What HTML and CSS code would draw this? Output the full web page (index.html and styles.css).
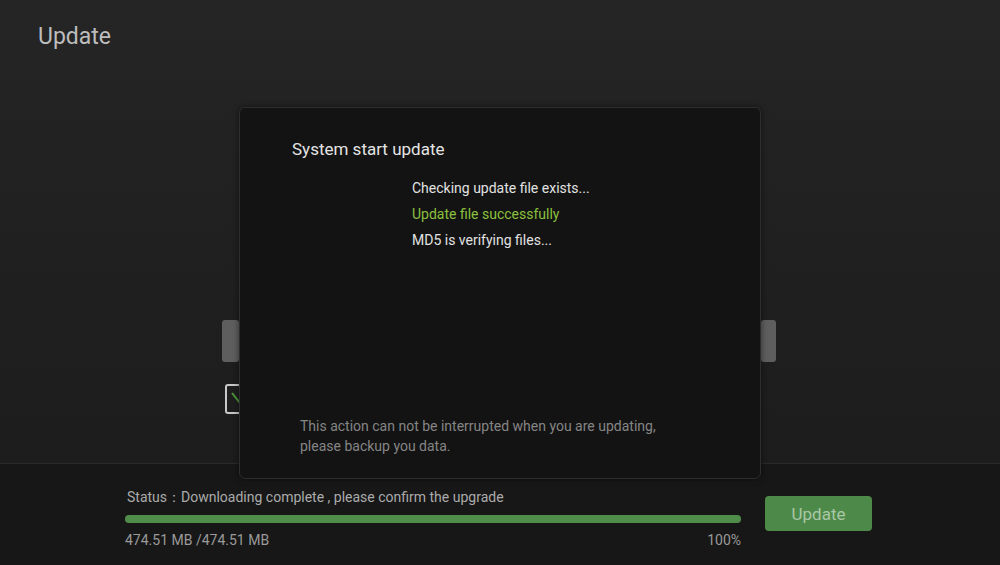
FILE: index.html
```html
<!DOCTYPE html>
<html lang="en">

<head>
    <meta charset="UTF-8">
    <meta name="viewport" content="width=device-width, initial-scale=1.0">
    <title>Update</title>
    <link rel="stylesheet" href="styles.css">
</head>

<body>
    <div class="screen">
        <h1 class="page-title">Update</h1>

        <!-- Settings panel, mostly covered by the dialog -->
        <div class="content">
            <div class="panel">
                <div class="pill-row">
                    <div class="pill"></div>
                    <div class="pill pill-right"></div>
                </div>
                <div class="checkbox">
                    <svg width="14" height="28" viewBox="0 0 14 28">
                        <path d="M5 8 L13 18" stroke="#4c9a3c" stroke-width="2" fill="none" />
                    </svg>
                </div>
            </div>
        </div>

        <div class="footer">
            <div class="progress-block">
                <div class="status">Status：Downloading complete , please confirm the upgrade</div>
                <div class="bar">
                    <div class="bar-fill" style="width: 100%"></div>
                </div>
                <div class="sizes">
                    <span>474.51 MB /474.51 MB</span>
                    <span>100%</span>
                </div>
            </div>
            <button class="update-button">Update</button>
        </div>

        <!-- Update dialog -->
        <div class="dialog">
            <div class="dialog-title">System start update</div>
            <ul class="steps">
                <li>Checking update file exists...</li>
                <li class="ok">Update file successfully</li>
                <li>MD5 is verifying files...</li>
            </ul>
            <p class="note">This action can not be interrupted when you are updating,<br>please backup you data.</p>
        </div>
    </div>
</body>

</html>
```

FILE: styles.css
```css
body {
    margin: 0;
    font-family: Roboto, "Liberation Sans", sans-serif;
    background-color: #1a1a1a;
}

.screen {
    position: relative;
    width: 1000px;
    height: 565px;
    display: flex;
    flex-direction: column;
    overflow: hidden;
    background: linear-gradient(180deg, #252525 0%, #202020 45%, #1b1b1b 100%);
}

.page-title {
    margin: 0;
    padding: 22px 0 0 38px;
    height: 38px;
    font-size: 23px;
    font-weight: 400;
    color: #bdbdbd;
    line-height: 30px;
}

.content {
    flex: 1;
}

.panel {
    width: 554px;
    margin: 260px 0 0 222px;
}

.pill-row {
    display: flex;
    justify-content: space-between;
}

.pill {
    width: 17px;
    height: 42px;
    background-color: #5e5e5e;
    border-radius: 3px;
}

.pill-right {
    width: 15px;
}

.checkbox {
    margin: 22px 0 0 3px;
    width: 14px;
    height: 26px;
    border: 2px solid #c8c8c8;
    border-radius: 3px;
}

.checkbox svg {
    display: block;
    margin-top: -1px;
}

.footer {
    height: 101px;
    border-top: 1px solid #2a2a2a;
    background-color: #171717;
    display: flex;
    align-items: flex-start;
    gap: 24px;
    padding-left: 125px;
}

.progress-block {
    width: 616px;
    padding-top: 24px;
}

.status {
    padding-left: 2px;
    font-size: 14px;
    line-height: 18px;
    color: #ababab;
}

.bar {
    margin-top: 9px;
    height: 8px;
    border-radius: 4px;
    background-color: #2c2c2c;
}

.bar-fill {
    height: 100%;
    border-radius: 4px;
    background-color: #4f8d48;
}

.sizes {
    margin-top: 8px;
    display: flex;
    justify-content: space-between;
    font-size: 14px;
    line-height: 18px;
    color: #9a9a9a;
}

.update-button {
    margin-top: 32px;
    width: 107px;
    height: 35px;
    border: none;
    border-radius: 4px;
    background-color: #4d8a49;
    color: #a9c7a6;
    font-family: Roboto, "Liberation Sans", sans-serif;
    font-size: 17px;
}

.dialog {
    position: absolute;
    left: 239px;
    top: 107px;
    width: 522px;
    height: 372px;
    box-sizing: border-box;
    padding: 30px 0 0 52px;
    background-color: #131313;
    border: 1px solid #2e2e2e;
    border-radius: 6px;
    box-shadow: 0 0 6px rgba(0, 0, 0, 0.5);
    display: flex;
    flex-direction: column;
}

.dialog-title {
    font-size: 17px;
    line-height: 22px;
    color: #e4e4e4;
}

.steps {
    list-style: none;
    margin: 15px 0 0 120px;
    padding: 0;
    font-size: 14px;
    line-height: 26px;
    color: #e2e2e2;
}

.steps .ok {
    color: #8cc03f;
}

.note {
    margin: auto 0 22px 8px;
    font-size: 14px;
    line-height: 20px;
    color: #858585;
}
```
